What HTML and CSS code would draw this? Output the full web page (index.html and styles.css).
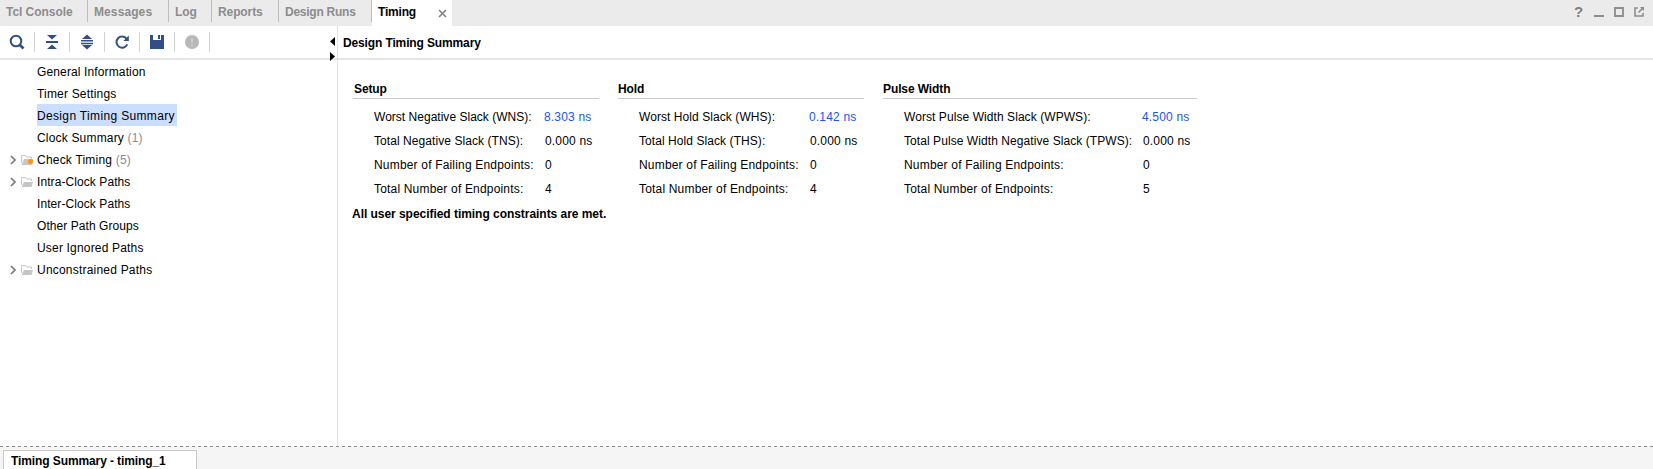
FILE: index.html
```html
<!DOCTYPE html>
<html lang="en">
<head>
<meta charset="utf-8">
<title>Timing</title>
<link rel="stylesheet" href="styles.css">
</head>
<body>
<nav class="tabs">
  <span class="tab t-console">Tcl Console</span>
  <span class="tab t-messages">Messages</span>
  <span class="tab t-log">Log</span>
  <span class="tab t-reports">Reports</span>
  <span class="tab t-runs">Design Runs</span>
  <span class="tab active">Timing
    <svg class="close" width="9" height="9" viewBox="0 0 9 9"><path d="M1 1l7 7M8 1l-7 7" stroke="#858585" stroke-width="1.700"/></svg>
  </span>
  <div class="window-controls">
    <span class="help">?</span>
    <svg width="10" height="12" viewBox="0 0 10 12"><path d="M0 10h10" stroke="#8c8c8c" stroke-width="2"/></svg>
    <svg width="10" height="12" viewBox="0 0 10 12"><path d="M1 2h8v8H1z" fill="none" stroke="#8c8c8c" stroke-width="1.800"/></svg>
    <svg width="10" height="12" viewBox="0 0 10 12"><path d="M4 2H1v8h8V7M4.500 6.500L8.500 2.500" fill="none" stroke="#8c8c8c" stroke-width="1.600"/><path d="M6 1h4v4z" fill="#8c8c8c"/></svg>
  </div>
</nav>
<main class="workspace">
  <aside class="sidebar">
    <div class="toolbar">
      <span class="tool"><svg width="16" height="16" viewBox="0 0 16 16"><circle cx="7" cy="7" r="5.300" fill="none" stroke="#324e86" stroke-width="2"/><path d="M10.500 10.500l4 4" stroke="#324e86" stroke-width="2.600"/></svg></span>
      <span class="tool"><svg width="16" height="16" viewBox="0 0 16 16"><path d="M3 1h10L8 5.500zM3 15h10L8 10.500zM2 7h12v2H2z" fill="#324e86"/></svg></span>
      <span class="tool"><svg width="16" height="16" viewBox="0 0 16 16"><path d="M3 5h10L8 .500zM3 11h10L8 15.500zM2 6h12v1.500H2zM2 8.700h12v1.500H2z" fill="#324e86"/></svg></span>
      <span class="tool"><svg width="16" height="16" viewBox="0 0 16 16"><path d="M12.600 4.800A5.600 5.600 0 1 0 13.200 10.300" fill="none" stroke="#324e86" stroke-width="2"/><path d="M14.800 1.500V7H9.300z" fill="#324e86"/></svg></span>
      <span class="tool"><svg width="16" height="16" viewBox="0 0 16 16"><path d="M1 1h3v5h8V1h3v14H1zM9 1h2v4H9z" fill="#324e86"/></svg></span>
      <span class="tool"><svg width="16" height="16" viewBox="0 0 16 16"><circle cx="8" cy="8" r="7" fill="#b8b8b8"/><path d="M8 4v5M8 10.500v2" stroke="#ccc" stroke-width="2"/></svg></span>
      <div class="collapse">
        <svg width="5" height="24" viewBox="0 0 5 24"><path d="M5 0v9L0 4.500zM0 15v9l5-4.500z"/></svg>
      </div>
    </div>
    <div class="tree">
      <div class="row"><span class="label n1">General Information</span></div>
      <div class="row"><span class="label">Timer Settings</span></div>
      <div class="row"><span class="label selected">Design Timing Summary</span></div>
      <div class="row"><span class="label">Clock Summary <i>(1)</i></span></div>
      <div class="row"><svg class="branch" width="24" height="14" viewBox="0 0 24 14"><path d="M1 3l4 4-4 4" fill="none" stroke="#777" stroke-width="1.700"/><path d="M11.500 10V2.500h4l1 1.500h5v2" fill="none" stroke="#c6c6c6"/><path d="M14 6h9l-1.500 6H11.500z" fill="#c6c6c6"/><circle cx="20.500" cy="8.500" r="2.600" fill="#ff9410"/></svg><span class="label n5">Check Timing <i>(5)</i></span></div>
      <div class="row"><svg class="branch" width="24" height="14" viewBox="0 0 24 14"><path d="M1 3l4 4-4 4" fill="none" stroke="#777" stroke-width="1.700"/><path d="M11.500 10V2.500h4l1 1.500h5v2" fill="none" stroke="#c6c6c6"/><path d="M14 7h9l-1.500 5H11.500z" fill="#c6c6c6"/></svg><span class="label n6">Intra-Clock Paths</span></div>
      <div class="row"><span class="label n6">Inter-Clock Paths</span></div>
      <div class="row"><span class="label n8">Other Path Groups</span></div>
      <div class="row"><span class="label">User Ignored Paths</span></div>
      <div class="row"><svg class="branch" width="24" height="14" viewBox="0 0 24 14"><path d="M1 3l4 4-4 4" fill="none" stroke="#777" stroke-width="1.700"/><path d="M11.500 10V2.500h4l1 1.500h5v2" fill="none" stroke="#c6c6c6"/><path d="M14 7h9l-1.500 5H11.500z" fill="#c6c6c6"/></svg><span class="label n10">Unconstrained Paths</span></div>
    </div>
  </aside>
  <section class="report">
    <h1>Design Timing Summary</h1>
    <div class="groups">
      <section class="group">
        <h2>Setup</h2>
        <dl>
          <dt class="w1">Worst Negative Slack (WNS):</dt><dd class="link">8.303 ns</dd>
          <dt class="slack">Total Negative Slack (TNS):</dt><dd>0.000 ns</dd>
          <dt>Number of Failing Endpoints:</dt><dd>0</dd>
          <dt>Total Number of Endpoints:</dt><dd>4</dd>
        </dl>
      </section>
      <section class="group hold">
        <h2>Hold</h2>
        <dl>
          <dt class="slack">Worst Hold Slack (WHS):</dt><dd class="link">0.142 ns</dd>
          <dt class="slack">Total Hold Slack (THS):</dt><dd>0.000 ns</dd>
          <dt>Number of Failing Endpoints:</dt><dd>0</dd>
          <dt>Total Number of Endpoints:</dt><dd>4</dd>
        </dl>
      </section>
      <section class="group pulse">
        <h2>Pulse Width</h2>
        <dl>
          <dt class="slack">Worst Pulse Width Slack (WPWS):</dt><dd class="link">4.500 ns</dd>
          <dt class="slack">Total Pulse Width Negative Slack (TPWS):</dt><dd>0.000 ns</dd>
          <dt>Number of Failing Endpoints:</dt><dd>0</dd>
          <dt>Total Number of Endpoints:</dt><dd>5</dd>
        </dl>
      </section>
    </div>
    <p class="verdict">All user specified timing constraints are met.</p>
  </section>
</main>
<footer class="bottom"><span class="bottom-tab">Timing Summary - timing_1</span></footer>
</body>
</html>
```
FILE: styles.css
```css
* { box-sizing: border-box; }
body {
  margin: 0;
  width: 1653px;
  height: 469px;
  display: flex;
  flex-direction: column;
  overflow: hidden;
  background: #fff;
  color: #000;
  font: 12px/22px "Liberation Sans", Arial, sans-serif;
  letter-spacing: 0.18px;
  white-space: nowrap;
}
svg { display: block; flex: none; }
h1, h2, p, dl, dd { margin: 0; }

.tabs {
  flex: none;
  height: 26px;
  display: flex;
  background: #ebebeb;
  font-weight: bold;
  letter-spacing: -0.1px;
}
.tab {
  flex: none;
  height: 22px;
  padding: 1px 0 0 6px;
  border-right: 1px solid #bdbdbd;
  color: #8c8c8c;
}
.t-console { width: 88px; letter-spacing: -0.05px; }
.t-messages { width: 81px; letter-spacing: 0.1px; }
.t-log { width: 43px; }
.t-reports { width: 67px; }
.t-runs { width: 93px; letter-spacing: -0.25px; }
.tab.active {
  width: 80px;
  height: 26px;
  display: flex;
  justify-content: space-between;
  padding-right: 5px;
  border: 0;
  background: #fff;
  color: #000;
  letter-spacing: -0.2px;
}
.close { margin-top: 8px; }
.window-controls {
  margin-left: auto;
  padding: 6px 9px 0 0;
  display: flex;
  gap: 10px;
}
.help { width: 10px; font-size: 15px; line-height: 12px; color: #808080; }

.workspace { height: 420px; display: flex; }
.sidebar { width: 338px; border-right: 1px solid #e2e2e2; }
.toolbar {
  height: 34px;
  display: flex;
  align-items: center;
  border-bottom: 2px solid #e5e5e5;
}
.tool {
  width: 35px;
  height: 20px;
  display: flex;
  align-items: center;
  justify-content: center;
  border-right: 1px solid #d2d2d2;
}
.collapse { margin: 14px 2px 0 auto; height: 24px; }
.row { height: 22px; display: flex; align-items: center; padding-left: 37px; }
.branch { margin: 1px 3px 0 -27px; }
.label { height: 22px; padding-top: 1px; }
.label i { color: #8c8c8c; font-style: normal; }
.n1 { letter-spacing: 0.13px; }
.n5, .n10 { letter-spacing: 0.21px; }
.n6 { letter-spacing: 0.08px; }
.n8 { letter-spacing: 0.06px; }
.selected { width: 140px; background: #ccdeff; letter-spacing: 0.34px; }

.report { flex: 1; }
h1 {
  height: 34px;
  padding: 6px 0 0 5px;
  border-bottom: 2px solid #e5e5e5;
  font-size: 12px;
  letter-spacing: -0.13px;
}
.groups { display: flex; gap: 19px; padding: 18px 0 0 15px; }
.group { width: 246px; }
.group.pulse { width: 314px; }
h2 {
  height: 21px;
  padding-left: 1px;
  border-bottom: 1px solid #cacaca;
  font-size: 12px;
  letter-spacing: -0.1px;
}
.hold h2, .pulse h2 { padding-left: 0; }
dl {
  display: grid;
  grid-template-columns: 171px 1fr;
  grid-auto-rows: 24px;
  padding: 6px 0 0 21px;
  line-height: 24px;
}
.pulse dl { grid-template-columns: 239px 1fr; }
.slack { letter-spacing: 0.07px; }
.w1 { letter-spacing: 0.02px; }
.link { margin-left: -1px; color: #1a53f0; }
.verdict { padding: 2px 0 0 14px; font-weight: bold; letter-spacing: -0.04px; }

.bottom {
  height: 23px;
  padding: 4px 0 0 3px;
  background: repeating-linear-gradient(90deg, #8c8c8c 0 3px, #f5f5f5 3px 6px) 0 0 / 100% 1px no-repeat #f5f5f5;
}
.bottom-tab {
  display: block;
  width: 194px;
  height: 19px;
  padding-left: 7px;
  border: 1px solid #cacaca;
  border-bottom: 0;
  background: #fff;
  font-weight: bold;
  line-height: 20px;
  letter-spacing: -0.1px;
}
```
